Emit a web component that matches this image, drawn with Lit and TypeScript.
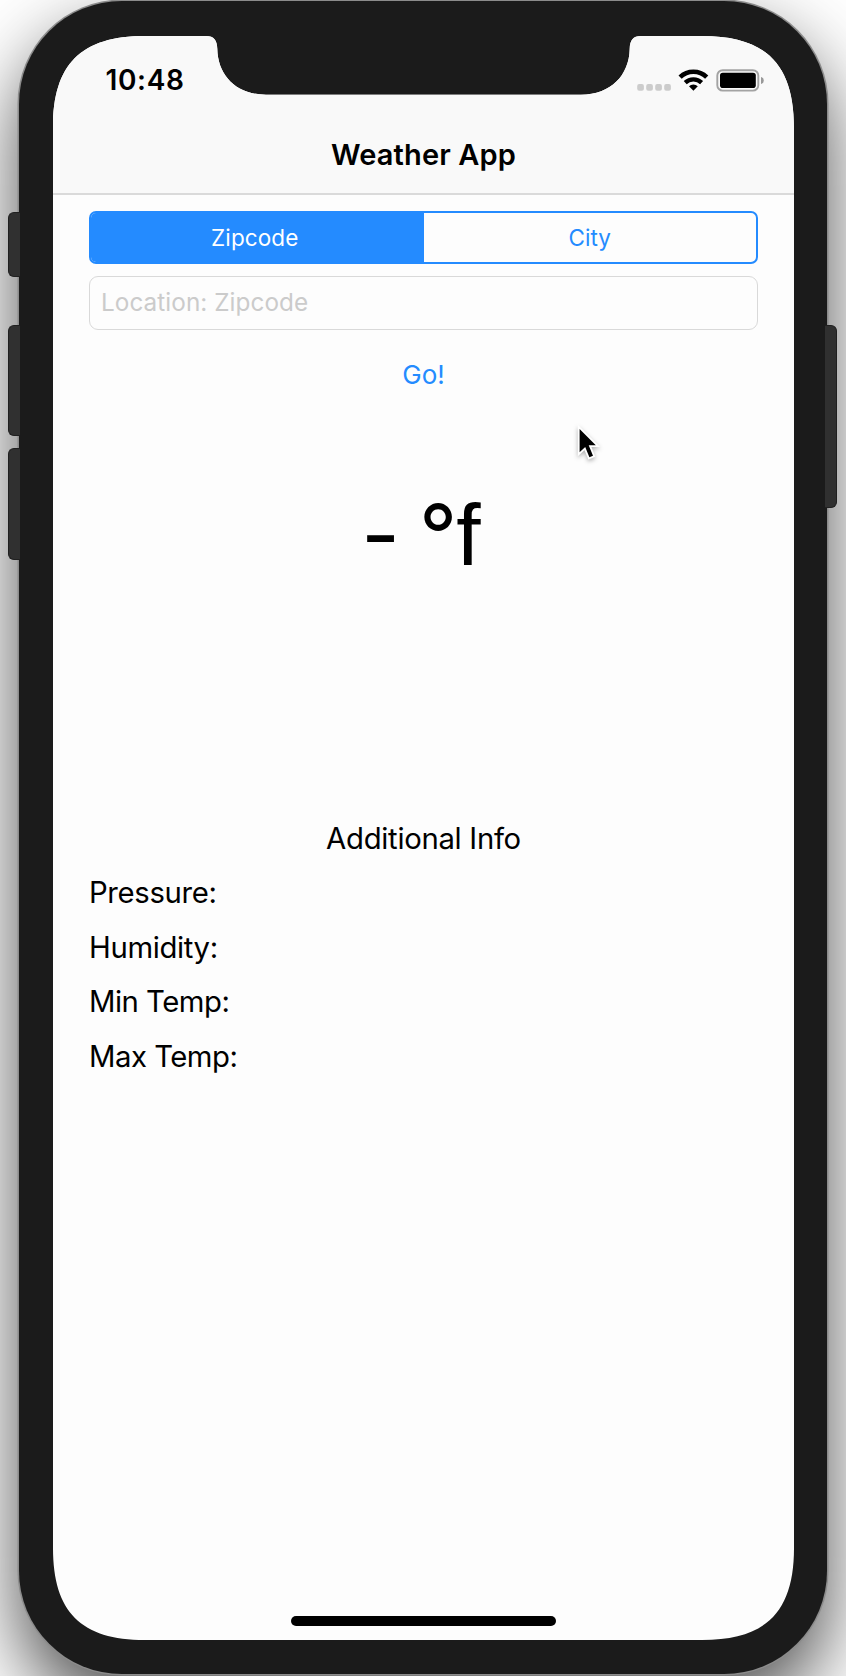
import { LitElement, html, css } from "lit";
import { classMap } from "lit/directives/class-map.js";

class AppRoot extends LitElement {
  static properties = { mode: { state: true } };
  mode = "Zipcode";

  static styles = css`
    :host {
      display: block;
      position: relative;
      box-sizing: border-box;
      width: 846px;
      height: 1676px;
      padding: 1.4px 0 0 19px;
      overflow: hidden;
      background: #fff;
      color: #000;
      font-family: "Inter", "Liberation Sans", sans-serif;
    }
    .phone {
      box-sizing: border-box;
      width: 808.4px;
      height: 1672.8px;
      padding: 34.6px 33.4px 35px 34px;
      border-radius: 103px;
      background: #1b1b1b;
      box-shadow: 0 0 0 1.5px #8c8c8c, 0 34px 78px rgba(0, 0, 0, 0.7);
    }
    .key {
      position: absolute;
      box-sizing: border-box;
      width: 12px;
      background: #303030;
      border: 1px solid #202020;
    }
    .key.left { left: 8px; border-right: 0; border-radius: 6px 0 0 6px; }
    .key.right { left: 825px; border-left: 0; border-radius: 0 6px 6px 0; }
    .mute { top: 212px; height: 65px; }
    .up { top: 325px; height: 111px; }
    .down { top: 448px; height: 112px; }
    .power { top: 325px; height: 183px; }

    .screen {
      display: flex;
      flex-direction: column;
      width: 741px;
      height: 1604px;
      background: #fdfdfd;
      clip-path: path("M92 0 L153 0 C161 0 164 4 164.3 13 C164.8 39 183 58.7 213 58.7 L528 58.7 C558 58.7 576.2 39 576.7 13 C577 4 580 0 588 0 L649 0 C713 0 741 28 741 92 L741 1512 C741 1576 713 1604 649 1604 L92 1604 C28 1604 0 1576 0 1512 L0 92 C0 28 28 0 92 0 Z");
    }
    .top {
      box-sizing: border-box;
      height: 158.6px;
      padding-top: 28px;
      background: #f9f9f9;
      border-bottom: 2px solid #dadada;
    }
    .status {
      display: flex;
      justify-content: space-between;
      align-items: center;
      height: 33px;
      padding: 0 30px 0 52.6px;
    }
    .time { font-size: 28px; font-weight: 600; letter-spacing: 0.6px; }
    .title {
      margin: 38.6px 0 0;
      text-align: center;
      font-size: 29px;
      line-height: 37px;
      font-weight: 600;
      letter-spacing: 0.15px;
    }
    .content {
      flex: 1;
      display: flex;
      flex-direction: column;
      padding: 16.4px 36px 0;
    }
    .segments {
      display: grid;
      grid-template-columns: 1fr 1fr;
      box-sizing: border-box;
      height: 52.6px;
      border: 2px solid #248bff;
      border-radius: 7px;
      overflow: hidden;
    }
    .segment {
      border: 0;
      padding: 1px 0 0;
      background: transparent;
      color: #248bff;
      font: 400 22.5px "Inter", sans-serif;
      letter-spacing: 0.1px;
    }
    .segment:first-child { padding-right: 5px; }
    .segment.on { background: #248bff; color: #fff; }
    .location {
      box-sizing: border-box;
      width: 100%;
      height: 54px;
      margin-top: 12.4px;
      padding: 0 12px 2px 11px;
      border: 1px solid #d9d9d9;
      border-radius: 9px;
      background: transparent;
      outline: 0;
      font: 400 24.3px "Inter", sans-serif;
      letter-spacing: 0.06px;
    }
    .location::placeholder { color: #cbcbcb; opacity: 1; }
    .go {
      align-self: center;
      height: 40px;
      margin-top: 25.2px;
      padding: 0;
      border: 0;
      background: none;
      color: #248bff;
      font: 400 26px/40px "Inter", sans-serif;
    }
    .temp {
      height: 120px;
      margin-top: 79.5px;
      padding-right: 5px;
      text-align: center;
      font-size: 84px;
      line-height: 120px;
      word-spacing: -4.5px;
    }
    .unit { font-family: "Liberation Sans", sans-serif; font-size: 87.6px; line-height: 1px; margin-left: -1px; }
    .info {
      display: grid;
      grid-auto-rows: 54.5px;
      margin: 217.2px 0 0 0;
      font-size: 29.3px;
      line-height: 54.5px;
      letter-spacing: -0.35px;
    }
    .heading { margin: 0; text-align: center; font: inherit; letter-spacing: -0.3px; }
    .row.tight { letter-spacing: -0.5px; }
    .home {
      align-self: center;
      width: 265px;
      height: 9.2px;
      margin-bottom: 14.4px;
      border-radius: 5px;
      background: #000;
    }
    .cursor { position: absolute; left: 572px; top: 420px; filter: drop-shadow(0 2px 2px rgba(0, 0, 0, 0.3)); }
  `;

  segment(name: string) {
    return html`<button class=${classMap({ segment: true, on: this.mode === name })}
      @click=${() => (this.mode = name)}>${name}</button>`;
  }

  render() {
    const rows = ["Pressure:", "Humidity:", "Min Temp:", "Max Temp:"];
    return html`
      <div class="phone">
        <div class="screen">
          <header class="top">
            <div class="status">
              <span class="time">10:48</span>
              <svg width="128" height="24" viewBox="0 0 128 24">
                <g fill="#cccccc">
                  <rect x="1.2" y="16" width="6.7" height="6.7" rx="2" />
                  <rect x="10.2" y="16" width="6.7" height="6.7" rx="2" />
                  <rect x="19.2" y="16" width="6.7" height="6.7" rx="2" />
                  <rect x="28.2" y="16" width="6.7" height="6.7" rx="2" />
                </g>
                <g fill="none" stroke="#000">
                  <path d="M44.1 9.1A19.2 19.2 0 0 1 70.7 9.1" stroke-width="4.6" />
                  <path d="M49.2 14.6A11.8 11.8 0 0 1 65.6 14.6" stroke-width="4.3" />
                </g>
                <path d="M57.4 22.7L53 18.3A6.4 6.4 0 0 1 61.8 18.3Z" />
                <rect x="81.3" y="2.2" width="41" height="20.4" rx="5.4" fill="none" stroke="#a3a3a3" stroke-width="1.9" />
                <rect x="84" y="4.7" width="35.8" height="15.4" rx="2.8" />
                <path d="M125 9a3.6 3.6 0 0 1 0 7Z" fill="#999" />
              </svg>
            </div>
            <h1 class="title">Weather App</h1>
          </header>
          <main class="content">
            <div class="segments">${this.segment("Zipcode")}${this.segment("City")}</div>
            <input class="location" placeholder="Location: ${this.mode}" />
            <button class="go">Go!</button>
            <div class="temp">- °<span class="unit">f</span></div>
            <section class="info">
              <h2 class="heading">Additional Info</h2>
              ${rows.map((r) => html`<div class=${classMap({ row: true, tight: r.includes("Temp") })}>${r}</div>`)}
            </section>
          </main>
          <div class="home"></div>
        </div>
      </div>
      <div class="key left mute"></div>
      <div class="key left up"></div>
      <div class="key left down"></div>
      <div class="key right power"></div>
      <svg class="cursor" width="34" height="46" viewBox="572 420 34 46">
        <path d="M579.6 429L595.8 445.3L588.7 445.3L593 455.8L589.4 457.2L585.2 447L579.6 452.2Z"
          stroke="#fff" stroke-width="3.6" paint-order="stroke" />
      </svg>
    `;
  }
}
customElements.define("app-root", AppRoot);
